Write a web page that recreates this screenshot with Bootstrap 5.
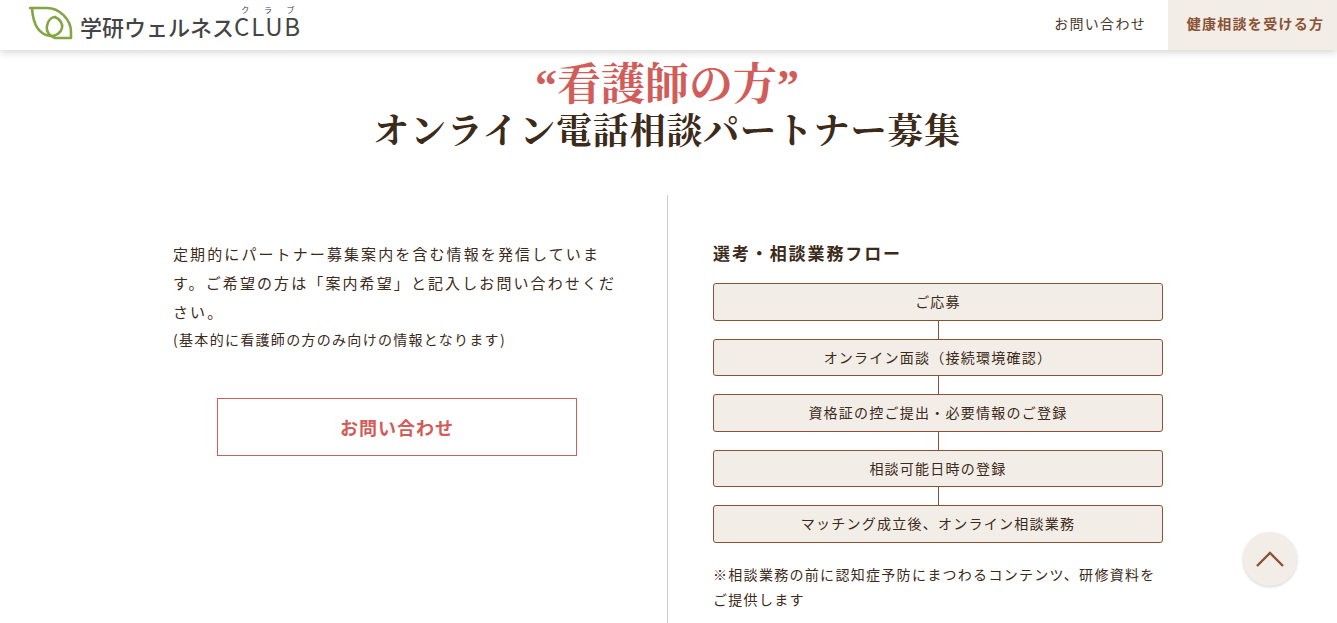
<!DOCTYPE html>
<html lang="ja">
<head>
  <meta charset="UTF-8" />
  <meta name="viewport" content="width=device-width, initial-scale=1.0" />
  <title>学研ウェルネスCLUB</title>
  <link rel="stylesheet" href="https://cdn.jsdelivr.net/npm/bootstrap@5.3.0/dist/css/bootstrap.min.css">
  <style>
    body {
      font-family: "Noto Sans CJK JP", "Noto Sans", sans-serif;
      color: #3c2a1a;
      background: #fff;
      height: 623px;
      overflow: hidden;
    }
    .site-head {
      height: 50px;
      background: #fff;
      box-shadow: 0 2px 8px rgba(0,0,0,0.18);
      position: relative;
      z-index: 5;
    }
    .logo-wrap { padding-left: 29px; gap: 7px; margin-top: -8px; }
    .logo-wrap svg { margin-top: 6px; }
    .logo-text { font-size: 22px; font-weight: 500; color: #444; line-height: 1; white-space: nowrap; }
    .logo-club { font-size: 24px; font-weight: 400; letter-spacing: 1.8px; }
    .logo-club rt { font-size: 8px; font-weight: 400; line-height: 1; letter-spacing: 0; color: #444; }
    .head-link { font-size: 14px; letter-spacing: 1.3px; color: #4a3a2c; text-decoration: none; margin-right: 22px; padding-bottom: 4px; }
    .head-cta {
      width: 169px; height: 50px; background: #f2ede7; color: #8a5234; padding: 0 0 4px 6px;
      font-size: 14px; font-weight: 700; letter-spacing: 1.3px; text-decoration: none;
    }
    .page-title { font-family: "Liberation Serif", "Noto Serif CJK JP", "Noto Sans CJK JP", serif; font-weight: 700; margin: 0; height: 145px; padding: 11px 3px 0 0; }
    .title-top { display: block; color: #d15d5a; font-size: 44px; line-height: 49px; }
    .title-sub { display: block; color: #3c2a1a; font-size: 36px; line-height: 44px; letter-spacing: .8px; }
    .two-cols { width: 990px; margin-left: 173px; height: 428px; }
    .col-left { width: 495px; padding: 44px 45px 0 0; border-right: 1px solid #ccc; }
    .col-right { width: 495px; padding: 44px 0 0 45px; }
    .intro-text { font-size: 15px; letter-spacing: 2.1px; line-height: 29px; margin: 0; }
    .intro-small { font-size: 14px; letter-spacing: 1.3px; line-height: 26px; margin: 0; }
    .ask-btn {
      display: flex; width: 360px; height: 58px; margin: 46px 0 0 44px;
      border: 1px solid #d15d5a; border-radius: 0; color: #d15d5a;
      font-size: 18px; font-weight: 700; letter-spacing: 1px; background: #fff;
      align-items: center; justify-content: center;
    }
    .flow-title { font-size: 17px; font-weight: 700; letter-spacing: 1.9px; line-height: 28px; margin: 0 0 16px; }
    .flow-box {
      height: 37.5px; background: #f2ede7; border: 1px solid #8a5234; border-radius: 3px;
      font-size: 14px; letter-spacing: 1.25px;
    }
    .flow-line { width: 1px; height: 18px; background: #8a5234; margin: 0 auto; }
    .flow-note { font-size: 14px; letter-spacing: 1.3px; line-height: 25px; margin: 19px 0 0; }
    .go-top {
      position: fixed; right: 40px; bottom: 37px; width: 54px; height: 54px;
      border-radius: 50%; background: #f2ede7; box-shadow: 0 1px 3px rgba(0,0,0,0.18);
    }
  </style>
</head>
<body>
  <header class="site-head d-flex align-items-center justify-content-between">
    <a href="#" class="logo-wrap d-flex align-items-center text-decoration-none">
      <svg width="44" height="36" viewBox="0 0 44 36" fill="none" stroke="#84a544" stroke-width="2.6" stroke-linecap="round" stroke-linejoin="round">
        <path d="M1 2H18C30 2 42 13 42 26V32H26C20 30 17 25 18 20C19 15 22 11 26 11" />
        <path d="M26 11C31 13 34 18 33 22C32 26 28 30 22 30C10 29 4 18 3 2" />
      </svg>
      <span class="logo-text">学研ウェルネス<ruby class="logo-club">CLUB<rt>クラブ</rt></ruby></span>
    </a>
    <nav class="d-flex align-items-center">
      <a href="#" class="head-link">お問い合わせ</a>
      <a href="#" class="head-cta d-flex align-items-center justify-content-center">健康相談を受ける方</a>
    </nav>
  </header>

  <h1 class="page-title text-center">
    <span class="title-top">“看護師の方”</span>
    <span class="title-sub">オンライン電話相談パートナー募集</span>
  </h1>

  <div class="two-cols d-flex">
    <div class="col-left">
      <p class="intro-text">定期的にパートナー募集案内を含む情報を発信しています。ご希望の方は「案内希望」と記入しお問い合わせください。</p>
      <p class="intro-small">(基本的に看護師の方のみ向けの情報となります)</p>
      <a href="#" class="btn ask-btn">お問い合わせ</a>
    </div>
    <div class="col-right">
      <h2 class="flow-title">選考・相談業務フロー</h2>
      <div id="flow"></div>
      <p class="flow-note">※相談業務の前に認知症予防にまつわるコンテンツ、研修資料をご提供します</p>
    </div>
  </div>

  <a href="#" class="go-top d-flex align-items-center justify-content-center" aria-label="ページトップへ">
    <svg width="28" height="16" viewBox="0 0 28 16" fill="none" stroke="#8a5234" stroke-width="2.4"><path d="M1 15L14 2L27 15" /></svg>
  </a>

  <script>
    const langkah = ['ご応募', 'オンライン面談（接続環境確認）', '資格証の控ご提出・必要情報のご登録', '相談可能日時の登録', 'マッチング成立後、オンライン相談業務'];
    const flow = document.getElementById('flow');
    langkah.forEach((teks, i) => {
      if (i > 0) {
        const garis = document.createElement('div');
        garis.className = 'flow-line';
        flow.appendChild(garis);
      }
      const el = document.createElement('div');
      el.className = 'flow-box d-flex align-items-center justify-content-center';
      el.textContent = teks;
      flow.appendChild(el);
    });
  </script>
</body>
</html>
